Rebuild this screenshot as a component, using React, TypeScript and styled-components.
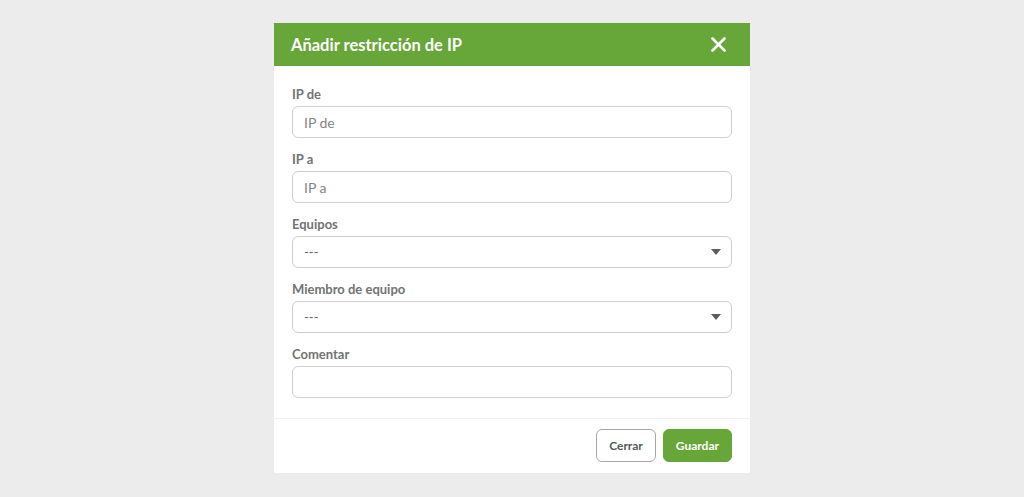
import React from 'react';
import styled, { createGlobalStyle } from 'styled-components';

const GlobalStyle = createGlobalStyle`
  html, body {
    margin: 0;
    padding: 0;
    background: #ebeceb;
    font-family: Lato, 'Noto Sans', sans-serif;
  }
  * {
    box-sizing: border-box;
  }
`;

const fields = [
  { label: 'IP de', placeholder: 'IP de', type: 'input' },
  { label: 'IP a', placeholder: 'IP a', type: 'input' },
  { label: 'Equipos', placeholder: '---', type: 'select' },
  { label: 'Miembro de equipo', placeholder: '---', type: 'select' },
  { label: 'Comentar', placeholder: '', type: 'input' },
];

const App = (): JSX.Element => {
  return (
    <>
      <GlobalStyle />
      <Page>
        <Modal>
          <Header>
            <Title>Añadir restricción de IP</Title>
            <CloseButton aria-label="Cerrar">
              <svg width="15" height="15" viewBox="0 0 15 15">
                <path
                  d="M1.5 1.5 L13.5 13.5 M13.5 1.5 L1.5 13.5"
                  stroke="#fff"
                  strokeWidth="2.6"
                  strokeLinecap="round"
                />
              </svg>
            </CloseButton>
          </Header>
          <Body>
            {fields.map((f, index) => (
              <Field key={index}>
                <Label>{f.label}</Label>
                {f.type === 'select' ? (
                  <SelectBox>
                    <span>{f.placeholder}</span>
                    <Caret />
                  </SelectBox>
                ) : (
                  <TextInput placeholder={f.placeholder} />
                )}
              </Field>
            ))}
          </Body>
          <Footer>
            <Button>Cerrar</Button>
            <Button primary>Guardar</Button>
          </Footer>
        </Modal>
      </Page>
    </>
  );
};

const Page = styled.div`
  width: 1024px;
  height: 497px;
  display: flex;
  justify-content: center;
  padding-top: 23px;
`;

const Modal = styled.div`
  width: 476px;
  height: 450px;
  background: #fff;
  display: flex;
  flex-direction: column;
`;

const Header = styled.div`
  height: 43px;
  background: #67a638;
  display: flex;
  align-items: center;
  justify-content: space-between;
  padding: 0 24px 0 17px;
`;

const Title = styled.h2`
  margin: 0;
  color: #fff;
  font-size: 16.5px;
  font-weight: 700;
`;

const CloseButton = styled.button`
  background: none;
  border: 0;
  padding: 0;
  display: flex;
  cursor: pointer;
`;

const Body = styled.div`
  padding: 20px 18px 7px;
  border-bottom: 1px solid #f0f0f0;
`;

const Field = styled.div`
  display: flex;
  flex-direction: column;
  margin-bottom: 13px;
`;

const Label = styled.label`
  font-size: 13px;
  line-height: 16px;
  font-weight: 700;
  color: #707472;
  margin-bottom: 4px;
`;

const TextInput = styled.input`
  height: 32px;
  border: 1px solid #cfcfcf;
  border-radius: 6px;
  padding: 0 11px;
  font-family: inherit;
  font-size: 14px;
  color: #333;
  outline: none;
  &::placeholder {
    color: #838685;
  }
`;

const SelectBox = styled.div`
  height: 32px;
  border: 1px solid #cfcfcf;
  border-radius: 6px;
  padding: 0 10px 0 11px;
  display: flex;
  align-items: center;
  justify-content: space-between;
  font-size: 13px;
  color: #666;
`;

const Caret = styled.span`
  width: 0;
  height: 0;
  border-left: 5px solid transparent;
  border-right: 5px solid transparent;
  border-top: 6px solid #5a5d5c;
`;

const Footer = styled.div`
  display: flex;
  justify-content: flex-end;
  gap: 7px;
  padding: 10px 18px 11px;
`;

const Button = styled.button<{ primary?: boolean }>`
  height: 33px;
  padding: 0 12px;
  border-radius: 6px;
  font-family: inherit;
  font-size: 12px;
  font-weight: 700;
  cursor: pointer;
  border: 1px solid ${(p) => (p.primary ? '#67a638' : '#a6a8a7')};
  background: ${(p) => (p.primary ? '#67a638' : '#fff')};
  color: ${(p) => (p.primary ? '#fff' : '#555958')};
`;

export default App;
